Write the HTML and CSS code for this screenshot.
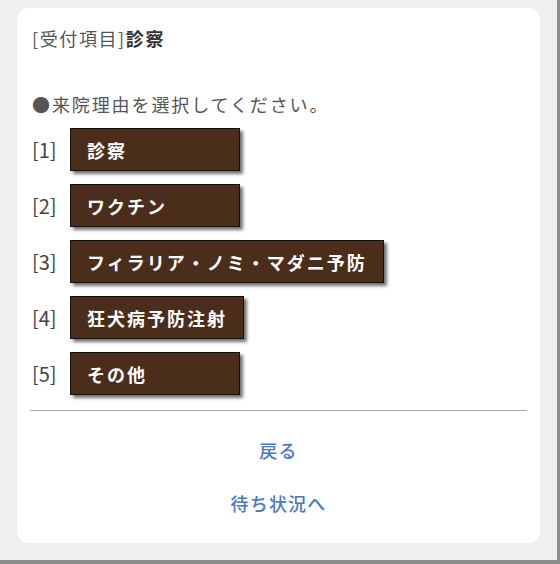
FILE: index.html
```html
<!DOCTYPE html>
<html lang="ja">
<head>
    <meta charset="UTF-8">
    <meta name="viewport" content="width=device-width, initial-scale=1.0">
    <title>受付</title>
    <link rel="stylesheet" href="styles.css">
</head>
<body>
    <div class="frame">
        <div class="card">
            <h1 class="title"><span class="title-label">[受付項目]</span>診察</h1>
            <p class="lead">●来院理由を選択してください。</p>
            <div class="choices">
                <div class="choice"><span class="num">[1]</span><button class="pick">診察</button></div>
                <div class="choice"><span class="num">[2]</span><button class="pick">ワクチン</button></div>
                <div class="choice"><span class="num">[3]</span><button class="pick">フィラリア・ノミ・マダニ予防</button></div>
                <div class="choice"><span class="num">[4]</span><button class="pick">狂犬病予防注射</button></div>
                <div class="choice"><span class="num">[5]</span><button class="pick">その他</button></div>
            </div>
            <hr class="divider">
            <div class="links">
                <a href="#">戻る</a>
                <a href="#">待ち状況へ</a>
            </div>
        </div>
    </div>
</body>
</html>
```

FILE: styles.css
```css
body {
    margin: 0;
    font-family: "Noto Sans CJK JP", "Noto Sans", sans-serif;
    color: #333;
}
.frame {
    width: 523px;
    height: 535px;
    padding: 8px 17px 17px 17px;
    background-color: #efefef;
    border-right: 3px solid #8c8c8c;
    border-bottom: 4px solid #8c8c8c;
}
.card {
    height: 535px;
    box-sizing: border-box;
    background-color: #fff;
    border-radius: 12px;
    padding: 18px 13px 0 13px;
}
.title {
    margin: 0 0 0 2px;
    font-size: 18px;
    line-height: 24px;
    font-weight: bold;
    letter-spacing: 1.6px;
    color: #333;
}
.title-label {
    font-weight: normal;
    color: #555;
}
.lead {
    margin: 42px 0 0 2px;
    font-size: 18px;
    line-height: 24px;
    letter-spacing: 1.9px;
    color: #555;
}
.choices {
    display: flex;
    flex-direction: column;
    gap: 13px;
    margin: 12px 0 0 2px;
}
.choice {
    display: flex;
    align-items: center;
}
.num {
    width: 38px;
    font-size: 20px;
    color: #444;
}
.pick {
    min-width: 170px;
    height: 43px;
    padding: 0 16px;
    text-align: left;
    font-family: inherit;
    font-size: 18px;
    font-weight: bold;
    letter-spacing: 2px;
    color: #fff;
    background-color: #4b2d1b;
    border: 1.5px solid #111;
    border-radius: 0;
    box-shadow: 3px 3px 3px rgba(0, 0, 0, 0.55);
    cursor: pointer;
}
.divider {
    margin: 15px 0 0 0;
    border: none;
    border-top: 1px solid #aaa;
}
.links {
    display: flex;
    flex-direction: column;
    align-items: center;
    gap: 29px;
    margin-top: 27px;
}
.links a {
    font-size: 18px;
    line-height: 24px;
    font-weight: 500;
    letter-spacing: 1.2px;
    color: #4a79c2;
    text-decoration: none;
}
```
